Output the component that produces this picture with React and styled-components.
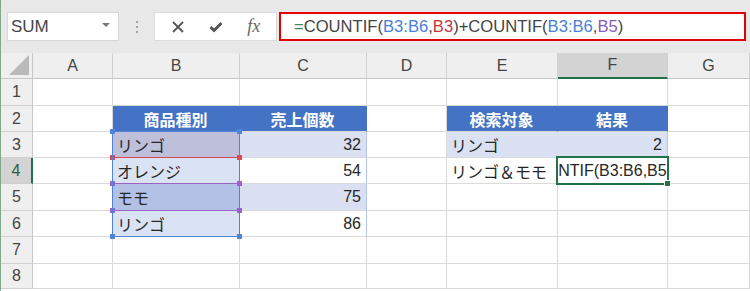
import React from "react";
import styled, { createGlobalStyle } from "styled-components";

const GlobalStyle = createGlobalStyle`
    body {
        margin: 0;
        background: #ffffff;
        font-family: "Liberation Sans", "Noto Sans CJK JP", sans-serif;
    }
`

const Frame = styled.div`
    width: 750px;
    height: 291px;
    box-sizing: border-box;
    border-left: 1px solid #7fa88d;
    overflow: hidden;
    background: #ffffff;
`

const Toolbar = styled.div`
    height: 53px;
    box-sizing: border-box;
    background: #e8e8e8;
    display: flex;
    align-items: flex-start;
    padding: 12px 4px 0 6px;
`

const NameBox = styled.div`
    width: 112px;
    height: 29px;
    box-sizing: border-box;
    background: #ffffff;
    border: 1px solid #d6d6d6;
    display: flex;
    align-items: center;
    justify-content: space-between;
    padding: 0 8px 0 3px;
    font-size: 17px;
    color: #454545;
`

const DropArrow = styled.span`
    width: 0;
    height: 0;
    border-left: 4px solid transparent;
    border-right: 4px solid transparent;
    border-top: 4px solid #777;
    margin-bottom: 4px;
`

const Dots = styled.div`
    width: 35px;
    height: 29px;
    display: flex;
    flex-direction: column;
    align-items: center;
    justify-content: center;
    gap: 3px;
    span {
        width: 2px;
        height: 2px;
        background: #a3a3a3;
    }
`

const FxButtons = styled.div`
    width: 123px;
    height: 29px;
    box-sizing: border-box;
    background: #ffffff;
    border: 1px solid #dcdcdc;
    display: flex;
    align-items: center;
    justify-content: space-around;
    padding: 0 4px;
    color: #555;
`

const FxLabel = styled.span`
    font-family: "Liberation Serif", "DejaVu Serif", serif;
    font-style: italic;
    font-size: 18px;
    color: #666;
`

const FormulaBar = styled.div`
    flex: 1;
    margin-left: 2px;
    height: 29px;
    box-sizing: border-box;
    border: 2px solid #e50000;
    background: #ffffff;
    display: flex;
    align-items: center;
    padding-left: 13px;
    font-size: 16.6px;
    color: #444;
    white-space: nowrap;
`

const Ref = styled.span`
    color: ${p => p.$color};
`

const Sheet = styled.div`
    display: grid;
    grid-template-columns: 32px 80px 127px 127px 80px 111px 110px 82px;
    grid-template-rows: 26px 27px 26px 26px 26px 27px 26px 27px 25px;
    font-size: 16px;
    color: #222;
`

const Cell = styled.div`
    grid-column: ${p => p.$c};
    grid-row: ${p => p.$r};
    box-sizing: border-box;
    border-right: 1px solid ${p => p.$edge || "#dadada"};
    border-bottom: 1px solid #dadada;
    background: ${p => p.$fill || "#ffffff"};
    display: flex;
    align-items: center;
    justify-content: ${p => p.$align || "flex-start"};
    padding: 0 5px 0 4px;
    white-space: nowrap;
    overflow: hidden;
    font-weight: ${p => (p.$bold ? 700 : 400)};
    color: ${p => p.$ink || "#262626"};
`

const ColHead = styled.div`
    grid-column: ${p => p.$c};
    grid-row: 1;
    box-sizing: border-box;
    background: ${p => (p.$active ? "#d3d3d3" : "#efefef")};
    border-right: 1px solid #d0d0d0;
    border-bottom: ${p => (p.$active ? "2px solid #217346" : "1px solid #c6c6c6")};
    display: flex;
    align-items: center;
    justify-content: center;
    color: #444;
    font-size: 16px;
`

const Corner = styled.div`
    grid-column: 1;
    grid-row: 1;
    background: #efefef;
    border-right: 1px solid #c6c6c6;
    border-bottom: 1px solid #c6c6c6;
    position: relative;
    &::after {
        content: "";
        position: absolute;
        right: 3px;
        bottom: 3px;
        width: 0;
        height: 0;
        border-left: 20px solid transparent;
        border-bottom: 20px solid #b9b9b9;
    }
`

const RowHead = styled.div`
    grid-column: 1;
    grid-row: ${p => p.$r};
    box-sizing: border-box;
    background: ${p => (p.$active ? "#d3d3d3" : "#efefef")};
    border-right: ${p => (p.$active ? "2px solid #217346" : "1px solid #c6c6c6")};
    border-bottom: 1px solid #d0d0d0;
    display: flex;
    align-items: center;
    justify-content: center;
    color: ${p => (p.$active ? "#2b5f40" : "#444")};
    font-size: 16px;
`

const RangeBox = styled.div`
    grid-column: ${p => p.$c};
    grid-row: ${p => p.$r};
    margin: -1px 0 0 -1px;
    border: 1px solid ${p => p.$color};
    position: relative;
    pointer-events: none;
`

const Handle = styled.span`
    position: absolute;
    width: 5px;
    height: 5px;
    background: ${p => p.$color};
    ${p => (p.$top ? "top: -3px;" : "bottom: -3px;")}
    ${p => (p.$left ? "left: -3px;" : "right: -3px;")}
`

const ActiveCell = styled.div`
    grid-column: 7;
    grid-row: 5;
    margin: -2px -1px -1px -2px;
    border: 2px solid #217346;
    background: #ffffff;
    position: relative;
    display: flex;
    align-items: center;
    justify-content: flex-end;
    font-size: 16px;
    color: #262626;
    white-space: nowrap;
`

const EditClip = styled.div`
    overflow: hidden;
    width: 100%;
    display: flex;
    justify-content: flex-end;
    span {
        margin-right: -5px;
    }
`

const FillHandle = styled.span`
    position: absolute;
    right: -4px;
    bottom: -4px;
    width: 5px;
    height: 5px;
    background: #217346;
    border: 1px solid #ffffff;
`

const columns = ["A", "B", "C", "D", "E", "F", "G"];

const head = "#4472c4";
const band = "#d9e1f2";

// [row, col, text, props]
const cells = [
    [3, 3, "商品種別", { $fill: head, $ink: "#fff", $bold: true, $align: "center", $edge: head }],
    [3, 4, "売上個数", { $fill: head, $ink: "#fff", $bold: true, $align: "center", $edge: head }],
    [4, 3, "リンゴ", { $fill: "#bdbfdb" }],
    [4, 4, "32", { $fill: "#dae0f2", $align: "flex-end", $edge: "#b4c6e7" }],
    [5, 3, "オレンジ", { $fill: "#dae3f4" }],
    [5, 4, "54", { $align: "flex-end", $edge: "#b4c6e7" }],
    [6, 3, "モモ", { $fill: "#b4c1e6" }],
    [6, 4, "75", { $fill: "#dae0f2", $align: "flex-end", $edge: "#b4c6e7" }],
    [7, 3, "リンゴ", { $fill: "#dae3f4" }],
    [7, 4, "86", { $align: "flex-end", $edge: "#b4c6e7" }],
    [3, 6, "検索対象", { $fill: head, $ink: "#fff", $bold: true, $align: "center", $edge: head }],
    [3, 7, "結果", { $fill: head, $ink: "#fff", $bold: true, $align: "center", $edge: head }],
    [4, 6, "リンゴ", { $fill: band, $edge: band }],
    [4, 7, "2", { $fill: band, $align: "flex-end", $edge: "#b4c6e7" }],
    [5, 6, "リンゴ＆モモ", { $edge: "transparent" }],
];

const Corners = ({ color }) => (
    <>
        <Handle $color={color} $top $left />
        <Handle $color={color} $top />
        <Handle $color={color} $left />
        <Handle $color={color} />
    </>
);

function buildGrid() {
    const out = [];
    const taken = {};
    cells.forEach(([r, c, text, props]) => {
        taken[r + "-" + c] = true;
        out.push(
            <Cell key={r + "-" + c} $r={r} $c={c} {...props}>
                {text}
            </Cell>
        );
    });
    for (let r = 2; r <= 9; r++) {
        for (let c = 2; c <= 8; c++) {
            if (taken[r + "-" + c]) continue;
            out.push(<Cell key={r + "-" + c} $r={r} $c={c} />);
        }
    }
    return out;
}

export default function App() {
    return (
        <>
            <GlobalStyle />
            <Frame>
                <Toolbar>
                    <NameBox>
                        SUM
                        <DropArrow />
                    </NameBox>
                    <Dots>
                        <span />
                        <span />
                        <span />
                    </Dots>
                    <FxButtons>
                        <svg width="14" height="14" viewBox="0 0 14 14">
                            <path d="M2 2 L12 12 M12 2 L2 12" stroke="#555" strokeWidth="1.8" fill="none" />
                        </svg>
                        <svg width="16" height="14" viewBox="0 0 16 14">
                            <path d="M2.5 7 L6 10.5 L13.5 3" stroke="#555" strokeWidth="3" fill="none" />
                        </svg>
                        <FxLabel>fx</FxLabel>
                    </FxButtons>
                    <FormulaBar>
                        <Ref $color="#3d8a5c">=</Ref>COUNTIF(<Ref $color="#4a7fd6">B3:B6</Ref>,
                        <Ref $color="#c9333a">B3</Ref>)+COUNTIF(<Ref $color="#4a7fd6">B3:B6</Ref>,
                        <Ref $color="#8a5bbf">B5</Ref>)
                    </FormulaBar>
                </Toolbar>
                <Sheet>
                    <Corner />
                    {columns.map((l, i) => (
                        <ColHead key={l} $c={i + 2} $active={l === "F"}>
                            {l}
                        </ColHead>
                    ))}
                    {[1, 2, 3, 4, 5, 6, 7, 8].map(n => (
                        <RowHead key={n} $r={n + 1} $active={n === 4}>
                            {n}
                        </RowHead>
                    ))}
                    {buildGrid()}
                    <RangeBox $c={3} $r={4} $color="#d9474f">
                        <Corners color="#d9474f" />
                    </RangeBox>
                    <RangeBox $c={3} $r={6} $color="#9b62c9">
                        <Corners color="#9b62c9" />
                    </RangeBox>
                    <RangeBox $c={3} $r="4 / 8" $color="#4f84d6">
                        <Corners color="#4f84d6" />
                    </RangeBox>
                    <ActiveCell>
                        <EditClip>
                            <span>=COUNTIF(B3:B6,B3)+COUNTIF(B3:B6,B5)</span>
                        </EditClip>
                        <FillHandle />
                    </ActiveCell>
                </Sheet>
            </Frame>
        </>
    );
}
